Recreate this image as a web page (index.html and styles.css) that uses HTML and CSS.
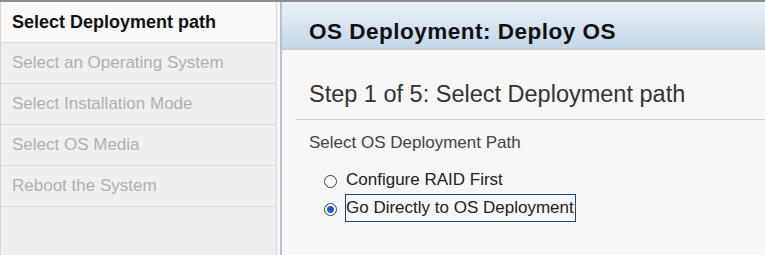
FILE: index.html
```html
<!DOCTYPE html>
<html lang="en">

<head>
    <meta charset="UTF-8">
    <title>OS Deployment</title>
    <link rel="stylesheet" href="styles.css">
</head>

<body>
    <div class="wizard">
        <ul class="steps">
            <li class="step active">Select Deployment path</li>
            <li class="step">Select an Operating System</li>
            <li class="step">Select Installation Mode</li>
            <li class="step">Select OS Media</li>
            <li class="step">Reboot the System</li>
        </ul>

        <div class="main">
            <div class="main-header">
                <h1>OS Deployment: Deploy OS</h1>
            </div>
            <div class="main-body">
                <h2>Step 1 of 5: Select Deployment path</h2>
                <div class="field-label">Select OS Deployment Path</div>
                <div class="options">
                    <label class="option">
                        <span class="radio"></span>
                        <span class="option-text">Configure RAID First</span>
                    </label>
                    <label class="option">
                        <span class="radio checked"></span>
                        <span class="option-text focused">Go Directly to OS Deployment</span>
                    </label>
                </div>
            </div>
        </div>
    </div>
</body>

</html>
```

FILE: styles.css
```css
/* Global */
body {
    margin: 0;
    font-family: 'Liberation Sans', Arial, sans-serif;
    background-color: #f7f7f7;
}

.wizard {
    display: flex;
    height: 255px;
    border-top: 2px solid #8c8c8c;
    box-sizing: border-box;
}

/* Left step list */
.steps {
    list-style: none;
    margin: 0;
    padding: 0;
    width: 277px;
    flex-shrink: 0;
    background-color: #efefef;
    border-left: 1px solid #d4d4d4;
    border-right: 1px solid #d8d8d8;
    box-sizing: border-box;
}

.step {
    height: 41px;
    line-height: 40px;
    padding-left: 11px;
    font-size: 17px;
    color: #afafaf;
    border-bottom: 1px solid #d9d9d9;
    box-sizing: border-box;
}

.step.active {
    background-color: #fafafa;
    color: #111;
    font-size: 18px;
    font-weight: bold;
}

/* Right panel */
.main {
    flex: 1;
    margin-left: 3px;
    border-left: 2px solid #b9c2cc;
    background-color: #f7f7f7;
}

.main-header {
    height: 48px;
    background: linear-gradient(#ebf2f8, #c4d6e7);
    border-bottom: 2px solid #c9ced3;
    box-sizing: border-box;
    padding: 19px 0 0 27px;
}

.main-header h1 {
    margin: 0;
    line-height: 22px;
    font-size: 22.5px;
    letter-spacing: 0.5px;
    color: #111;
}

.main-body {
    padding-left: 14px;
}

.main-body h2 {
    margin: 0;
    padding: 31px 0 11px 13px;
    font-size: 23.5px;
    font-weight: normal;
    color: #333;
    border-bottom: 1px solid #d6d6d6;
}

.field-label {
    padding: 13px 0 0 13px;
    font-size: 17px;
    color: #444;
}

.options {
    padding: 13px 0 0 28px;
    display: flex;
    flex-direction: column;
}

.option {
    display: flex;
    align-items: center;
    gap: 8px;
    font-size: 17px;
    color: #222;
}

.radio {
    width: 11px;
    height: 11px;
    border: 1px solid #2c3d5c;
    border-radius: 50%;
    background-color: #fff;
    margin-top: 2px;
}

.radio.checked {
    background: radial-gradient(circle, #2d4fd8 0, #2d4fd8 3px, #fff 4px);
}

.option-text {
    padding: 3px 1px 3px 0;
    border: 1px solid transparent;
}

.option-text.focused {
    border-color: #1f4583;
}
```
